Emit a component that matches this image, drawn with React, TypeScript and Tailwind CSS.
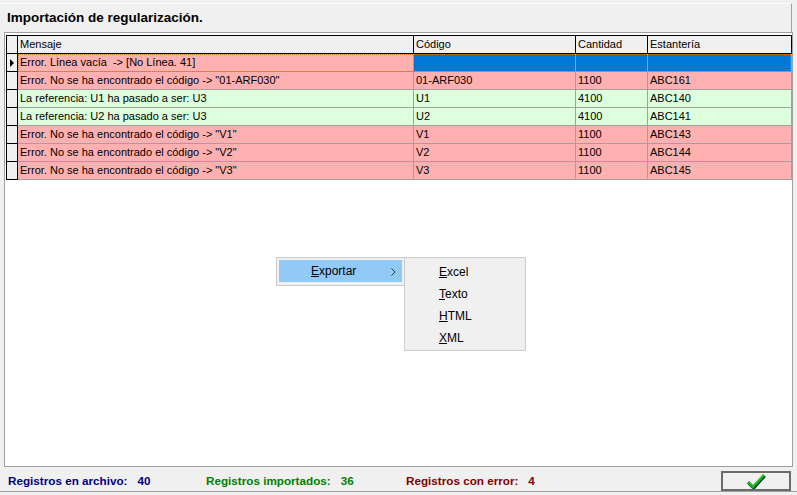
import { Fragment } from 'react'

type Row = { msg: string; code: string; qty: string; shelf: string; kind: 'err' | 'ok' }

const ROWS: Row[] = [
  { msg: 'Error. Línea vacía  -> [No Línea. 41]', code: '', qty: '', shelf: '', kind: 'err' },
  { msg: 'Error. No se ha encontrado el código -> "01-ARF030"', code: '01-ARF030', qty: '1100', shelf: 'ABC161', kind: 'err' },
  { msg: 'La referencia: U1 ha pasado a ser: U3', code: 'U1', qty: '4100', shelf: 'ABC140', kind: 'ok' },
  { msg: 'La referencia: U2 ha pasado a ser: U3', code: 'U2', qty: '4100', shelf: 'ABC141', kind: 'ok' },
  { msg: 'Error. No se ha encontrado el código -> "V1"', code: 'V1', qty: '1100', shelf: 'ABC143', kind: 'err' },
  { msg: 'Error. No se ha encontrado el código -> "V2"', code: 'V2', qty: '1100', shelf: 'ABC144', kind: 'err' },
  { msg: 'Error. No se ha encontrado el código -> "V3"', code: 'V3', qty: '1100', shelf: 'ABC145', kind: 'err' },
]

const cell = 'h-full pl-[2px] border-r border-[#a0a0a0] whitespace-pre overflow-hidden leading-[17px]'
const head = 'h-full pl-[2px] border-r border-black whitespace-pre overflow-hidden leading-[17px]'

function Check() {
  return (
    <svg width="20" height="16" viewBox="0 0 20 16">
      <path d="M2 9 L7 14 L18 2" fill="none" stroke="#00104a" strokeWidth="3.2" strokeLinejoin="round" transform="translate(0.6 0.8)" />
      <path d="M2 9 L7 14 L18 2" fill="none" stroke="#10b010" strokeWidth="3" strokeLinejoin="miter" />
      <path d="M3 8.5 L7 12.5 L17 1.8" fill="none" stroke="#7ae07a" strokeWidth="0.8" />
    </svg>
  )
}

export default function App() {
  return (
    <div className="w-[797px] h-[495px] bg-[#f0f0f0] relative flex flex-col text-black" style={{ fontFamily: '"Liberation Sans", Arial, sans-serif' }}>
      {/* Title */}
      <div className="h-[32px] pt-[3px] pr-[5px]">
        <div className="h-full border-t border-r border-t-[#fafafa] border-r-[#a0a0a0] flex items-center pl-[7px] pt-[1px] text-[13.5px] font-bold">
          Importación de regularización.
        </div>
      </div>

      {/* Grid */}
      <div className="ml-[4px] w-[789px] h-[435px] border border-[#a0a0a0] bg-white pl-[1px] pt-[2px] text-[11px]">
        <div className="w-[786px] flex flex-col">
          {/* header */}
          <div className="flex h-[19px] border-t border-b border-black bg-[#f0f0f0]">
            <div className="w-[12px] h-full border-l border-r border-black" />
            <div className={`w-[396px] ${head}`}>Mensaje</div>
            <div className={`w-[162px] ${head}`}>Código</div>
            <div className={`w-[72px] ${head}`}>Cantidad</div>
            <div className={`w-[144px] ${head}`}>Estantería</div>
          </div>
          {ROWS.map((r, i) => {
            const bg = r.kind === 'err' ? 'bg-[#ffb0b0]' : 'bg-[#ddffdd]'
            const sel = i === 0
            const other = sel ? 'bg-[#0078d7] text-white' : bg
            return (
              <Fragment key={i}>
                <div className="flex h-[18px] relative">
                  <div className="w-[12px] h-full border-l border-r border-b border-black bg-[#f0f0f0] flex items-center pl-[3px]">
                    {sel && <div className="w-0 h-0 border-y-[4px] border-y-transparent border-l-[4px] border-l-black" />}
                  </div>
                  <div className={`w-[396px] ${cell} border-b ${bg}`}>{r.msg}</div>
                  <div className={`w-[162px] ${cell} border-b ${other}`}>{r.code}</div>
                  <div className={`w-[72px] ${cell} border-b ${other}`}>{r.qty}</div>
                  <div className={`w-[144px] ${cell} border-b ${other}`}>{r.shelf}</div>
                  {sel && <div className="absolute top-0 bottom-0 left-[12px] right-[1px] border border-dotted border-[#c8782c]" />}
                </div>
              </Fragment>
            )
          })}
        </div>
      </div>

      {/* Footer */}
      <div className="h-[25px] border-b border-[#a0a0a0] flex items-center text-[11.7px] font-bold pt-[3px]">
        <div className="w-[206px] pl-[8px] text-[#000080]">
          Registros en archivo:<span className="ml-[10px]">40</span>
        </div>
        <div className="w-[200px] text-[#008000]">
          Registros importados:<span className="ml-[10px]">36</span>
        </div>
        <div className="flex-1 text-[#800000]">
          Registros con error:<span className="ml-[10px]">4</span>
        </div>
        <button className="w-[70px] h-[20px] mr-[6px] border-2 border-[#6b6b6b] bg-[#f0f0f0] flex items-center justify-center">
          <Check />
        </button>
      </div>

      {/* Context menu */}
      <div className="absolute left-[276px] top-[257px] w-[129px] h-[29px] bg-[#f0f0f0] border border-[#cccccc] p-[2px] text-[12px]">
        <div className="h-[22px] bg-[#91c9f7] flex items-center pl-[32px] relative">
          <span><span className="underline">E</span>xportar</span>
          <svg className="absolute right-[6px] top-[8px]" width="5" height="8" viewBox="0 0 5 8">
            <path d="M0.5 0.5 L4 4 L0.5 7.5" fill="none" stroke="#333" strokeWidth="1" />
          </svg>
        </div>
      </div>
      <div className="absolute left-[404px] top-[257px] w-[122px] bg-[#f0f0f0] border border-[#cccccc] pt-[3px] pb-[1px] text-[12px]">
        {[['E', 'xcel'], ['T', 'exto'], ['H', 'TML'], ['X', 'ML']].map(([a, b]) => (
          <div key={a + b} className="h-[22px] flex items-center pl-[34px]">
            <span><span className="underline">{a}</span>{b}</span>
          </div>
        ))}
      </div>
    </div>
  )
}
